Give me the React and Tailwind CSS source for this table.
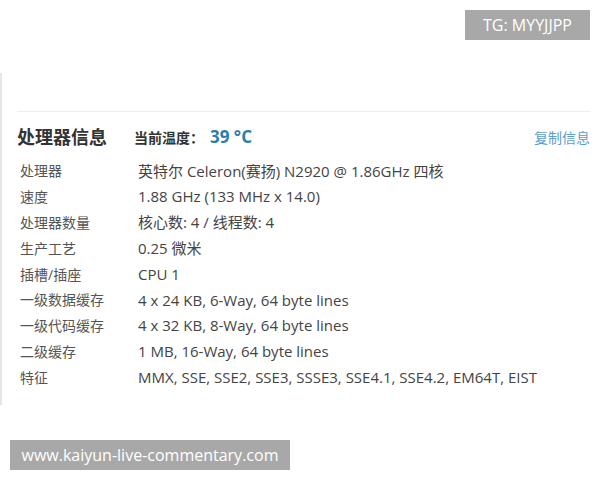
const rows = [
  ["处理器", "英特尔 Celeron(赛扬) N2920 @ 1.86GHz 四核"],
  ["速度", "1.88 GHz (133 MHz x 14.0)"],
  ["处理器数量", "核心数: 4 / 线程数: 4"],
  ["生产工艺", "0.25 微米"],
  ["插槽/插座", "CPU 1"],
  ["一级数据缓存", "4 x 24 KB, 6-Way, 64 byte lines"],
  ["一级代码缓存", "4 x 32 KB, 8-Way, 64 byte lines"],
  ["二级缓存", "1 MB, 16-Way, 64 byte lines"],
  ["特征", "MMX, SSE, SSE2, SSE3, SSSE3, SSE4.1, SSE4.2, EM64T, EIST"],
];

export default function App() {
  return (
    <div
      className="w-[600px] h-[480px] bg-white overflow-hidden"
      style={{ fontFamily: '"Open Sans", "Noto Sans CJK SC", sans-serif' }}
    >
      <div className="flex justify-end pt-[10px] pr-[10px]">
        <div className="w-[125px] h-[30px] bg-[#a8a8a8] text-white text-[16px] flex items-center justify-center">
          TG: MYYJJPP
        </div>
      </div>

      <div className="mt-[33px] h-[332px] pt-[38px] border-l-2 border-[#e6e6e6]">
        <div className="ml-[15px] mr-[10px] border-t border-[#eeeeee] pt-[10px]">
          <div className="h-[30px] flex items-center">
            <span className="text-[18px] font-bold text-[#333] w-[117px]">处理器信息</span>
            <span className="text-[14px] font-semibold text-[#333]">当前温度：</span>
            <span className="text-[17px] font-bold text-[#2f7cad] ml-[6px]">39 °C</span>
            <span className="ml-auto text-[14px] text-[#5c9ccb]">复制信息</span>
          </div>
          <div className="mt-[6px]">
            {rows.map(([label, value]) => (
              <div key={label} className="h-[25.8px] flex items-center">
                <span className="w-[121px] pl-[3px] text-[14px] text-[#555]">{label}</span>
                <span className="text-[15px] text-[#444]">{value}</span>
              </div>
            ))}
          </div>
        </div>
      </div>

      <div className="ml-[10px] mt-[35px] w-[280px] h-[30px] bg-[#a8a8a8] text-white text-[16px] flex items-center justify-center">
        www.kaiyun-live-commentary.com
      </div>
    </div>
  );
}
